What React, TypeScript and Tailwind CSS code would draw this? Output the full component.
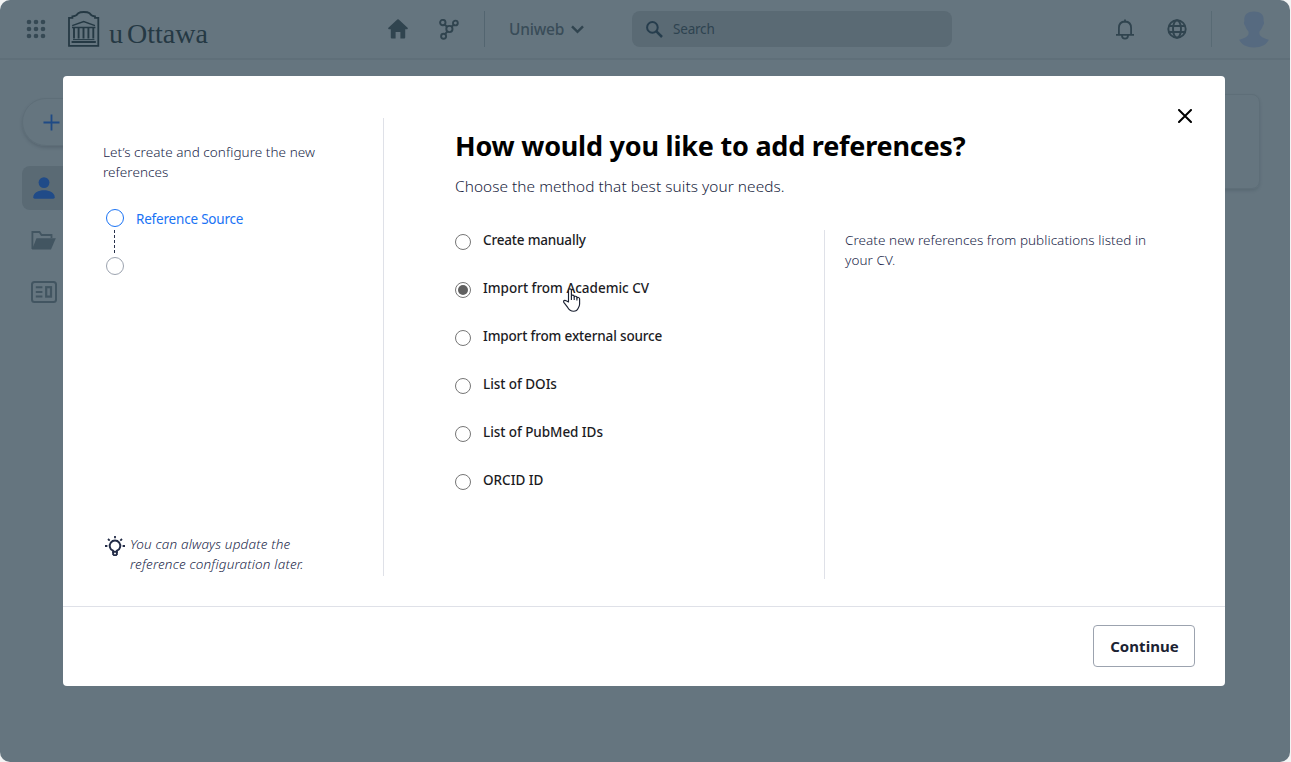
import React, { useState } from 'react';

const methods = [
  { label: 'Create manually', tracking: 'tracking-[-0.18px]' },
  { label: 'Import from Academic CV', tracking: 'tracking-[0px]' },
  { label: 'Import from external source', tracking: 'tracking-[-0.15px]' },
  { label: 'List of DOIs', tracking: 'tracking-[-0.05px]' },
  { label: 'List of PubMed IDs', tracking: 'tracking-[-0.06px]' },
  { label: 'ORCID ID', tracking: 'tracking-[0px]' },
];

function AppsIcon() {
  const steps = [2.2, 9.2, 16.2];
  return (
    <svg width="20" height="20" viewBox="0 0 20 20" fill="#364954">
      {steps.map((y) => steps.map((x) => <circle key={`${x}-${y}`} cx={x + 0.8} cy={y + 0.8} r="2.3" />))}
    </svg>
  );
}

function Logo() {
  return (
    <div className="flex h-9 items-start">
      <svg width="32" height="36" viewBox="0 0 32 36" fill="none" stroke="#253944">
        <path d="M1 34.9V6.9H4.4V5.4C7.3 5.2 9.1 4 10.2 2.2C12.5.6 19.2.6 21.6 2.2C22.7 4 24.4 5.2 27 5.4V6.9H30.3V34.9Z" strokeWidth="1.8" />
        <path d="M4.2 14.6L15.7 10.5L27 14.6" strokeWidth="1.4" />
        <path d="M4 16.5H27.4" strokeWidth="1.4" />
        <path d="M6 17V27.5M10.6 17V27.5M15.5 17V27.5M20.4 17V27.5M25.3 17V27.5" strokeWidth="1.9" />
        <path d="M5 28.6H26.4" strokeWidth="1" />
        <path d="M3.6 31H27.8" strokeWidth="1.8" />
      </svg>
      <span className="ml-[9px] flex pt-[8px] font-['Liberation_Serif',serif] text-[28px] leading-[30px] text-[#253944]">
        <span>u</span>
        <span className="ml-[4px] tracking-[0px]">Ottawa</span>
      </span>
    </div>
  );
}

function HubIcon() {
  return (
    <svg width="20" height="21" viewBox="0 0 20 21" fill="none" stroke="#30444f" strokeWidth="1.9">
      <circle cx="3.8" cy="3.6" r="2.7" />
      <circle cx="16.4" cy="4" r="2.4" />
      <circle cx="10.4" cy="10" r="3.1" />
      <circle cx="4.6" cy="17.2" r="2.5" />
      <path d="M5.6 5.4L8.2 8M12.6 7.8L14.7 5.8M8.4 12.4L6.1 15.2" />
    </svg>
  );
}

function BulbIcon() {
  return (
    <svg width="20" height="21" viewBox="0 0 20 21" fill="none" stroke="#232c47" strokeWidth="1.9">
      <path d="M8 15.7V14.7A5.3 5.3 0 1 1 12 14.7V15.7Z" />
      <path d="M7.2 15.4H12.8V18.2L11.6 19.9H8.4L7.2 18.2Z" fill="#232c47" stroke="none" />
      <path d="M9.1 17.5H10.9" stroke="#fff" strokeWidth="1.3" />
      <path d="M10 0V2.3M0 10H2.4M17.6 10H20M3 3L4.7 4.7M17 3L15.3 4.7" strokeWidth="1.8" />
    </svg>
  );
}

function HandCursor() {
  return (
    <svg width="18" height="24" viewBox="0 0 18 24" fill="#fff" stroke="#1c2233" strokeWidth="1.15" strokeLinejoin="round">
      <path d="M5.5 14V2.4C5.5.4 8.4.4 8.4 2.4V8C8.6 6.6 11.2 6.8 11.2 8.4V9C11.5 7.8 13.9 8 13.9 9.5V10C14.4 9 16.6 9.3 16.6 10.8V16C16.6 18 15.9 19 15.3 20C14.5 22 12.7 23.2 10.6 23.2C7.7 23.2 5.8 21.5 4.7 19.4L1 14.6C-.1 12.7 1.7 11.7 3.2 12.8Z" />
      <path d="M8.4 8V12M11.2 8.7V12M13.9 9.8V12.6" fill="none" />
    </svg>
  );
}

function Header() {
  return (
    <header className="flex h-[60px] items-center border-b-2 border-[#5f6f79] text-[#30444f]">
      <div className="flex w-[362px] items-center pl-[26px]">
        <AppsIcon />
        <div className="ml-[22px]"><Logo /></div>
      </div>
      <div className="flex w-[270px] items-center pl-[26px]">
        <svg width="20" height="20" viewBox="0 0 20 20" fill="#30444f">
          <path d="M9.3.5Q10 0 10.7.5L19.6 8.8Q20.3 10.2 19 10.3H17.2V18.4Q17.2 19.4 16.2 19.4H12.4V13H7.6V19.4H3.8Q2.8 19.4 2.8 18.4V10.3H1Q-.3 10.2.4 8.8Z" />
        </svg>
        <div className="ml-[31px]"><HubIcon /></div>
        <div className="ml-[25px] h-9 w-px bg-[#536570]" />
        <span className="ml-[24px] w-[56px] text-[15.5px] leading-6 font-medium tracking-[-0.2px] text-[#394c58]">Uniweb</span>
        <svg className="ml-[6px]" width="13" height="9" viewBox="0 0 13 9" fill="none" stroke="#30444f" strokeWidth="2.4">
          <path d="M1 1.3L6.5 6.8L12 1.3" />
        </svg>
      </div>
      <div className="flex h-9 w-80 items-center rounded-lg bg-[#5a6a74] pl-[14px]">
        <svg width="17" height="17" viewBox="0 0 17 17" fill="none" stroke="#263d4d" strokeWidth="2">
          <circle cx="6.4" cy="6.4" r="5.3" />
          <path d="M10.4 10.4L16 16" strokeWidth="2.5" />
        </svg>
        <span className="ml-[10px] text-[13.5px] tracking-[-0.2px] text-[#2e4350]">Search</span>
      </div>
      <div className="ml-auto flex items-center pr-[21px]">
        <svg width="18" height="21" viewBox="0 0 18 21" fill="none" stroke="#30444f" strokeWidth="1.8">
          <path d="M0 15.8H18M2.9 15.5V9C2.9 5.4 5.1 2.7 9 2.5C12.9 2.7 15.1 5.4 15.1 9V15.5M6 16.5C6 20.6 12 20.6 12 16.5M9 .4V2.8" />
        </svg>
        <svg className="ml-[33px]" width="20" height="20" viewBox="0 0 20 20" fill="none" stroke="#30444f" strokeWidth="1.9">
          <circle cx="10" cy="10" r="8.7" />
          <ellipse cx="10" cy="10" rx="4" ry="8.7" />
          <path d="M2 7H18M2 13H18" />
        </svg>
        <div className="ml-6 h-9 w-px bg-[#586a74]" />
        <svg className="ml-[27px]" width="30" height="37" viewBox="0 0 30 37" fill="#566a80">
          <path d="M15 .5C21 .5 25.4 3.3 24.6 10.1C25.6 11.3 25 14.1 23.8 14.7C23.2 17.2 21.8 18.8 20.5 20.5C19.7 24.7 22 26.3 29.8 28.8C27.5 33.8 22 36.5 15 36.5C8 36.5 2.5 33.8 .2 28.8C8 26.3 10.3 24.7 9.5 20.5C8.2 18.8 6.8 17.2 6.2 14.7C5 14.1 4.4 11.3 5.4 10.1C4.6 3.3 9 .5 15 .5Z" />
        </svg>
      </div>
    </header>
  );
}

function Sidebar() {
  return (
    <nav className="flex w-[180px] flex-col">
      <div className="flex h-12 items-center rounded-full border border-[#5e6e78] pl-[20px] shadow-[0_2px_3px_rgba(50,65,75,0.25)]">
        <svg width="17" height="17" viewBox="0 0 17 17" stroke="#1f4a85" strokeWidth="1.8">
          <path d="M8.5 .5V16.5M.5 8.5H16.5" />
        </svg>
      </div>
      <div className="mt-5 flex h-11 items-center rounded-lg bg-[#5a6a74] pl-[11px]">
        <svg width="22" height="22" viewBox="0 0 22 22" fill="#204b88">
          <circle cx="11" cy="5.6" r="5.4" />
          <path d="M.3 20.3C.3 11 21.7 11 21.7 20.3Q21.7 21.7 20.3 21.7H1.7Q.3 21.7.3 20.3Z" />
        </svg>
      </div>
      <div className="mt-2 flex h-11 items-center pl-[9px]">
        <svg width="25" height="19" viewBox="0 0 25 19" fill="#425561">
          <path d="M1.4 18V1H8.5L10.5 4H20.5V7" fill="none" stroke="#425561" strokeWidth="1.8" />
          <path d="M5.5 7.2H24.8L20 18.5H1Z" />
        </svg>
      </div>
      <div className="mt-2 flex h-11 items-center pl-[9px]">
        <svg width="26" height="22" viewBox="0 0 26 22" fill="none" stroke="#425561" strokeWidth="2">
          <rect x="1" y="1" width="24" height="20" rx="2.5" />
          <rect x="15.2" y="6.2" width="4.8" height="9.4" strokeWidth="2.2" />
          <path d="M4.8 6.2H11.4M4.8 11H11.4M4.8 15.6H11.4" />
        </svg>
      </div>
    </nav>
  );
}

function Steps() {
  return (
    <div className="mt-[26px] flex flex-col pl-[3px] text-[13.5px] leading-5">
      <div className="flex h-5 items-center">
        <span className="size-[18px] rounded-full border border-[#1a73f5]" />
        <span className="ml-3 pt-[2px] tracking-[-0.2px] text-[#1a73f5]">Reference Source</span>
      </div>
      <svg className="my-[2px] ml-2" width="1" height="24" viewBox="0 0 1 24" stroke="#28304a" strokeWidth="1" strokeDasharray="3 2">
        <path d="M.5 0V24" />
      </svg>
      <div className="flex h-5 items-center">
        <span className="size-[18px] rounded-full border border-[#9ca3af]" />
      </div>
    </div>
  );
}

export default function App() {
  const [selected, setSelected] = useState(1);
  return (
    <div className="h-[762px] w-[1291px] overflow-hidden bg-[#f3f4f4] font-['Noto_Sans',sans-serif]">
      <div className="relative h-[762px] w-[1290px] overflow-hidden rounded-[10px] bg-[#65757f]">
        <Header />
        <div className="flex justify-between pt-[38px] pr-[30px] pl-[22px]">
          <Sidebar />
          <div className="-mt-[4px] h-[95px] w-[980px] rounded-lg border border-[#5e6e78] shadow-[0_2px_3px_rgba(50,65,75,0.2)]" />
        </div>

        <div role="dialog" className="absolute top-[76px] left-[63px] flex h-[610px] w-[1162px] flex-col overflow-hidden rounded-[4px] bg-white">
          <div className="flex h-[530px]">
            <aside className="mt-[42px] ml-10 flex h-[458px] w-[281px] flex-col border-r border-[#dfe1e8] pt-6">
              <p className="w-[250px] text-[13.5px] leading-5 font-light tracking-[0.06px] text-[#22284a]">
                Let’s create and configure the new<br />references
              </p>
              <Steps />
              <div className="mt-auto mb-[2px] flex pl-[2px]">
                <div className="mt-[2px]"><BulbIcon /></div>
                <p className="ml-[5px] text-[13.5px] leading-5 font-light tracking-[0.17px] text-[#22284a] italic">
                  You can always update the<br />reference configuration later.
                </p>
              </div>
            </aside>

            <main className="flex flex-1 flex-col pt-[50px] pl-[71px]">
              <h1 className="text-[27px] leading-10 font-bold tracking-[-0.22px] whitespace-nowrap text-black">How would you like to add references?</h1>
              <p className="mt-[9px] text-[15.4px] leading-6 font-light tracking-[0.06px] text-[#181e40]">Choose the method that best suits your needs.</p>
              <div className="mt-[31px] flex h-[349px]">
                <div className="flex w-[370px] flex-col gap-7 border-r border-[#dfe1e8]">
                  {methods.map((m, i) => (
                    <div key={m.label} role="radio" aria-checked={selected === i} onClick={() => setSelected(i)} className="relative flex h-5">
                      <span className="mt-1 flex size-4 items-center justify-center rounded-full border border-[#767676]">
                        {selected === i && <span className="size-[10px] rounded-full bg-[#606060]" />}
                      </span>
                      <span className={`ml-3 text-[13.5px] leading-5 font-medium text-[#1c1c1f] ${m.tracking}`}>{m.label}</span>
                      {i === 1 && <span className="absolute top-[10px] left-[108px]"><HandCursor /></span>}
                    </div>
                  ))}
                </div>
                <p className="ml-5 w-[330px] text-[13.5px] leading-5 font-light tracking-[0.05px] text-[#22284a]">
                  Create new references from publications listed in<br />your CV.
                </p>
              </div>
            </main>
            <button aria-label="Close" className="mt-[33px] mr-[33px] -ml-4 flex h-[14px] w-[14px] shrink-0">
              <svg width="14" height="14" viewBox="0 0 14 14" stroke="#000" strokeWidth="2" strokeLinecap="round">
                <path d="M1 1L13 13M13 1L1 13" />
              </svg>
            </button>
          </div>
          <footer className="flex h-20 items-start justify-end border-t border-[#dfe1e8] pt-[18px] pr-[30px]">
            <button className="h-[42px] w-[102px] rounded-[4px] border border-[#9ca3af] pl-px text-[15px] leading-6 font-bold tracking-[0.05px] text-[#1b2333]">Continue</button>
          </footer>
        </div>
      </div>
    </div>
  );
}
